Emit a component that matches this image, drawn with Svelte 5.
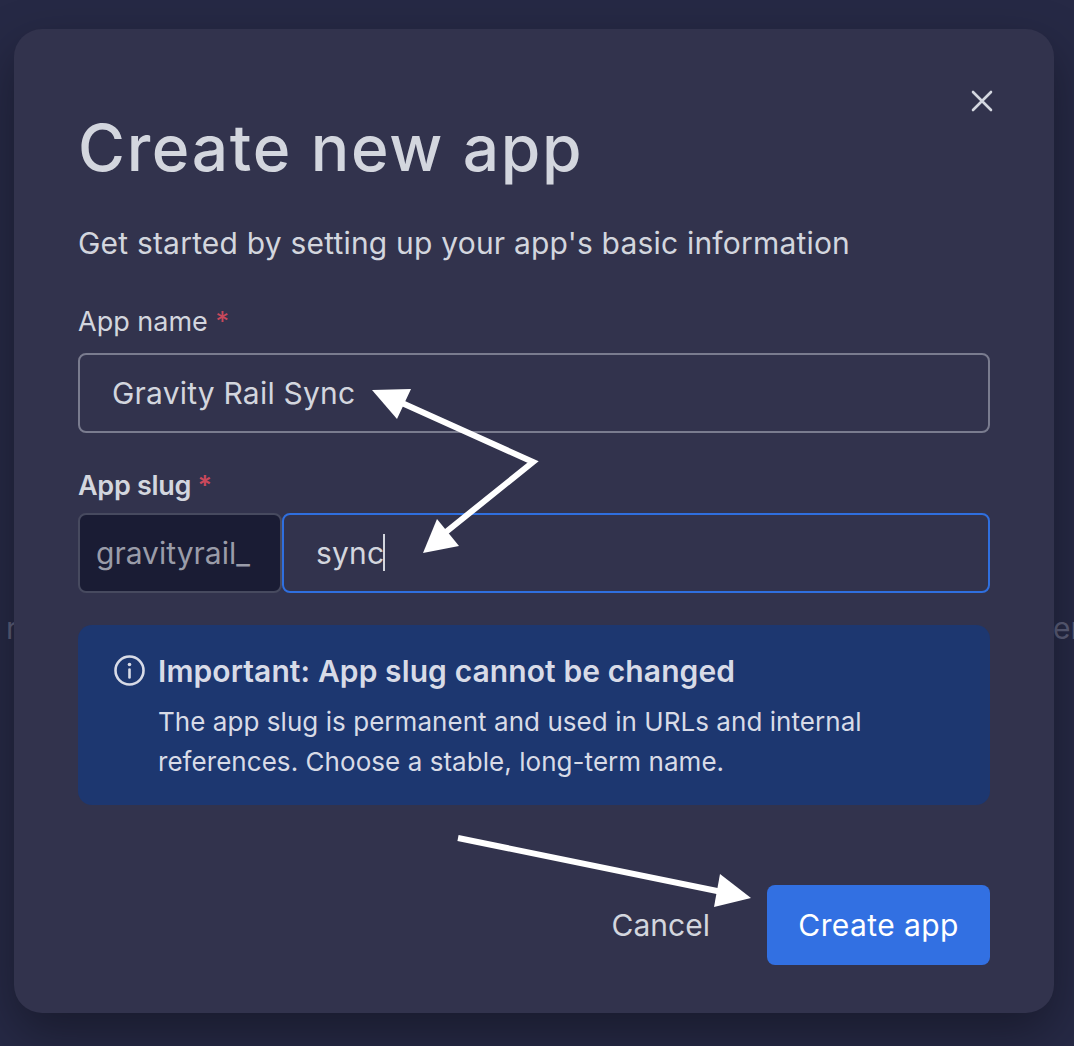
<script>
  let appName = $state('Gravity Rail Sync');
  let appSlug = $state('sync');
</script>

<div class="page">
  <span class="behind left">r</span>
  <span class="behind right">er</span>

  <div class="modal">
    <button class="close" aria-label="Close">
      <svg width="24" height="24" viewBox="0 0 24 24" fill="none" stroke="currentColor" stroke-width="2.6" stroke-linecap="round">
        <path d="M3 3 L21 21 M21 3 L3 21" />
      </svg>
    </button>

    <h1>Create new app</h1>
    <p class="subtitle">Get started by setting up your app's basic information</p>

    <label class="field-label" for="app-name">App name <span class="req">*</span></label>
    <input id="app-name" class="input" type="text" bind:value={appName} />

    <label class="field-label strong" for="app-slug">App slug <span class="req">*</span></label>
    <div class="slug-row">
      <div class="prefix">gravityrail_</div>
      <div class="slug-input">
        <input id="app-slug" class="input focused" type="text" bind:value={appSlug} />
        <span class="caret"></span>
      </div>
    </div>

    <div class="notice">
      <svg class="info" width="31" height="31" viewBox="0 0 31 31" fill="none" stroke="currentColor" stroke-width="2.6">
        <circle cx="15.5" cy="15.5" r="14" />
        <path d="M15.5 14.5 V22.5" stroke-linecap="round" />
        <circle cx="15.5" cy="9.5" r="1.8" fill="currentColor" stroke="none" />
      </svg>
      <div>
        <div class="notice-title">Important: App slug cannot be changed</div>
        <div class="notice-body">The app slug is permanent and used in URLs and internal references. Choose a stable, long-term name.</div>
      </div>
    </div>

    <div class="actions">
      <button class="cancel">Cancel</button>
      <button class="primary">Create app</button>
    </div>
  </div>

  <svg class="arrows" width="1074" height="1046" viewBox="0 0 1074 1046">
    <g fill="none" stroke="#fff" stroke-width="6" stroke-linejoin="miter">
      <path d="M402 403 L533 462 L441 536" />
      <path d="M458 838 L722 892" />
    </g>
    <g fill="#fff">
      <path d="M372 390 L411 389 L397 419 Z" />
      <path d="M423 553 L437 519 L459 546 Z" />
      <path d="M751 898 L720 874 L714 907 Z" />
    </g>
  </svg>
</div>

<style>
  :global(body) {
    background: #262945;
  }

  .page {
    position: relative;
    box-sizing: border-box;
    height: 1046px;
    padding: 29px 20px 33px 14px;
    overflow: hidden;
    font-family: Inter, "Noto Sans", sans-serif;
    background: #262945;
  }

  .behind {
    position: absolute;
    top: 610px;
    font-size: 30px;
    line-height: 36px;
    color: #5a5d78;
  }
  .behind.left { left: 6px; }
  .behind.right { left: 1053px; }

  .modal {
    position: relative;
    box-sizing: border-box;
    height: 984px;
    padding: 79px 64px 48px;
    background: #32334d;
    border-radius: 28px;
    box-shadow: 0 20px 50px rgba(0, 0, 0, 0.35);
  }

  .close {
    position: absolute;
    top: 60px;
    right: 60px;
    padding: 0;
    display: flex;
    background: none;
    border: none;
    color: #d4d7e0;
  }

  h1 {
    margin: 0;
    font-size: 64px;
    line-height: 80px;
    font-weight: 500;
    letter-spacing: 1.7px;
    color: #d3d6de;
  }

  .subtitle {
    margin: 35px 0 0;
    font-size: 30px;
    line-height: 40px;
    letter-spacing: 0.2px;
    color: #d3d6de;
  }

  .field-label {
    display: block;
    margin-top: 41px;
    margin-bottom: 13px;
    font-size: 27px;
    line-height: 36px;
    color: #d3d6de;
  }
  .field-label.strong {
    font-weight: 600;
    margin-top: 35px;
    margin-bottom: 9px;
    letter-spacing: -0.3px;
  }
  .req { color: #c9485b; }

  .input {
    display: block;
    box-sizing: border-box;
    width: 100%;
    height: 80px;
    padding: 0 32px;
    font: inherit;
    font-size: 30px;
    letter-spacing: 0.2px;
    color: #d3d6de;
    background: transparent;
    border: 2px solid #7a7c8f;
    border-radius: 8px;
    outline: none;
  }
  .input.focused { border-color: #2f6fdf; }

  .slug-row {
    display: flex;
    height: 80px;
  }

  .prefix {
    box-sizing: border-box;
    width: 204px;
    padding-left: 16px;
    display: flex;
    align-items: center;
    font-size: 30px;
    color: #9a9ca9;
    background: #1a1c34;
    border: 2px solid #474a5f;
    border-radius: 8px;
  }

  .slug-input {
    position: relative;
    flex: 1;
  }

  .caret {
    position: absolute;
    left: 101px;
    top: 21px;
    width: 1.5px;
    height: 37px;
    background: #d3d6de;
  }

  .notice {
    display: flex;
    gap: 13px;
    margin-top: 32px;
    height: 180px;
    box-sizing: border-box;
    padding: 28px 36px;
    background: #1d3770;
    border-radius: 14px;
    color: #d8dbe7;
  }

  .info { flex: none; margin-top: 2px; }

  .notice-title {
    font-size: 30px;
    line-height: 36px;
    font-weight: 600;
    letter-spacing: 0.1px;
  }

  .notice-body {
    margin-top: 13px;
    font-size: 26px;
    line-height: 40px;
    letter-spacing: 0.05px;
    max-width: 740px;
  }

  .actions {
    display: flex;
    justify-content: flex-end;
    align-items: center;
    gap: 57px;
    margin-top: 80px;
  }

  .cancel, .primary {
    font: inherit;
    font-size: 30px;
    border: none;
    padding: 0;
  }

  .cancel {
    background: none;
    color: #d3d6de;
  }

  .primary {
    width: 223px;
    height: 80px;
    letter-spacing: 0.4px;
    color: #fff;
    background: #3270e2;
    border-radius: 8px;
  }

  .arrows {
    position: absolute;
    inset: 0;
    pointer-events: none;
  }
</style>
